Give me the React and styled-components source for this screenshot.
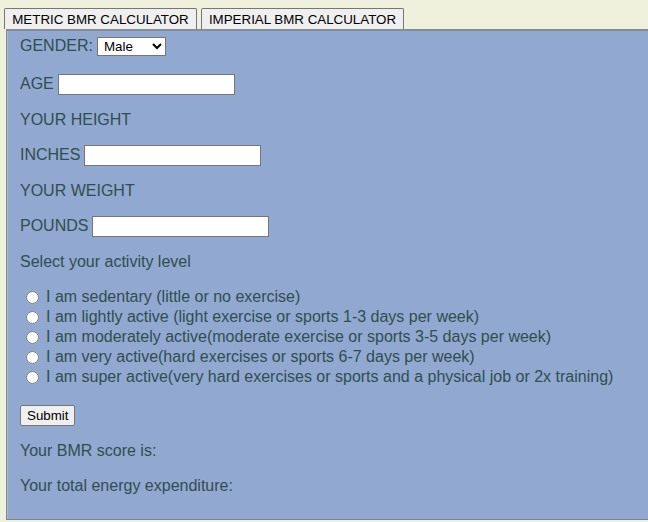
import React from 'react';
import styled, { createGlobalStyle } from 'styled-components';

const Global = createGlobalStyle`
  html, body {
    margin: 0;
    padding: 0;
    overflow: hidden;
    background: #eff1dd;
  }
  body {
    font-family: "Liberation Sans", Arial, sans-serif;
  }
`;

const Page = styled.div`
  padding: 8px 0 0 4px;
`;

const TabBar = styled.div`
  display: flex;
  gap: 4px;
  height: 21px;
`;

const TabButton = styled.button`
  font-family: "Liberation Sans", Arial, sans-serif;
  font-size: 13.33px;
  color: #000;
  background: #efefef;
  border: 1px solid #767676;
  border-bottom: none;
  border-radius: 2px 2px 0 0;
  padding: 0 6px;
  height: 21px;
  width: ${p => p.$w}px;
  cursor: pointer;
`;

const Panel = styled.div`
  margin-left: 2px;
  height: 491px;
  box-sizing: border-box;
  background: #91a8d0;
  border: 1px solid #7f8690;
  border-right: none;
  border-top: 2px solid #868c95;
  box-shadow: inset 1px 0 0 #a9b6cc;
  padding: 4px 0 0 13px;
  color: #2f4f4f;
  font-size: 16px;
`;

const Form = styled.form`
  display: flex;
  flex-direction: column;
`;

const Row = styled.div`
  display: flex;
  align-items: center;
  height: 22px;
  gap: 4px;
  margin-top: ${p => p.$mt ?? 14}px;
`;

const Label = styled.label`
  white-space: nowrap;
`;

const TextBox = styled.input`
  box-sizing: border-box;
  width: 177px;
  height: 21px;
  border: 1px solid #767676;
  border-radius: 0;
  background: #fff;
  margin: 0;
  font-size: 13.33px;
`;

const Select = styled.select`
  box-sizing: border-box;
  width: 69px;
  height: 19px;
  font-family: "Liberation Sans", Arial, sans-serif;
  font-size: 13.33px;
  border: 1px solid #767676;
  border-radius: 0;
  background: #fff;
  color: #000;
  padding: 0 0 0 2px;
`;

const RadioGroup = styled.div`
  display: flex;
  flex-direction: column;
  margin-top: 14px;
`;

const RadioLine = styled.label`
  display: flex;
  align-items: center;
  height: 20px;
  white-space: nowrap;
`;

const Radio = styled.input`
  width: 13px;
  height: 13px;
  margin: 0 7px 0 6px;
  accent-color: #fff;
`;

const SubmitButton = styled.button`
  font-family: "Liberation Sans", Arial, sans-serif;
  font-size: 13.33px;
  color: #000;
  background: #efefef;
  border: 1px solid #767676;
  border-radius: 2px;
  height: 21px;
  padding: 0 6px;
`;

const activities = [
  'I am sedentary (little or no exercise)',
  'I am lightly active (light exercise or sports 1-3 days per week)',
  'I am moderately active(moderate exercise or sports 3-5 days per week)',
  'I am very active(hard exercises or sports 6-7 days per week)',
  'I am super active(very hard exercises or sports and a physical job or 2x training)',
];

export default function App() {
  return (
    <Page>
      <Global />
      <TabBar>
        <TabButton $w={193}>METRIC BMR CALCULATOR</TabButton>
        <TabButton $w={203}>IMPERIAL BMR CALCULATOR</TabButton>
      </TabBar>
      <Panel>
        <Form onSubmit={e => e.preventDefault()}>
          <Row $mt={0}>
            <Label>GENDER:</Label>
            <Select defaultValue="male">
              <option value="male">Male</option>
              <option value="female">Female</option>
            </Select>
          </Row>
          <Row $mt={16}>
            <Label>AGE</Label>
            <TextBox type="text" />
          </Row>
          <Row>
            <Label>YOUR HEIGHT</Label>
          </Row>
          <Row $mt={13}>
            <Label>INCHES</Label>
            <TextBox type="text" />
          </Row>
          <Row>
            <Label>YOUR WEIGHT</Label>
          </Row>
          <Row $mt={13}>
            <Label>POUNDS</Label>
            <TextBox type="text" />
          </Row>
          <Row>
            <Label>Select your activity level</Label>
          </Row>
          <RadioGroup>
            {activities.map((a, i) => (
              <RadioLine key={i}>
                <Radio type="radio" name="activity" value={i} />
                {a}
              </RadioLine>
            ))}
          </RadioGroup>
          <Row $mt={17}>
            <SubmitButton type="submit">Submit</SubmitButton>
          </Row>
          <Row $mt={14}>
            <Label>Your BMR score is:</Label>
          </Row>
          <Row $mt={13}>
            <Label>Your total energy expenditure:</Label>
          </Row>
        </Form>
      </Panel>
    </Page>
  );
}
